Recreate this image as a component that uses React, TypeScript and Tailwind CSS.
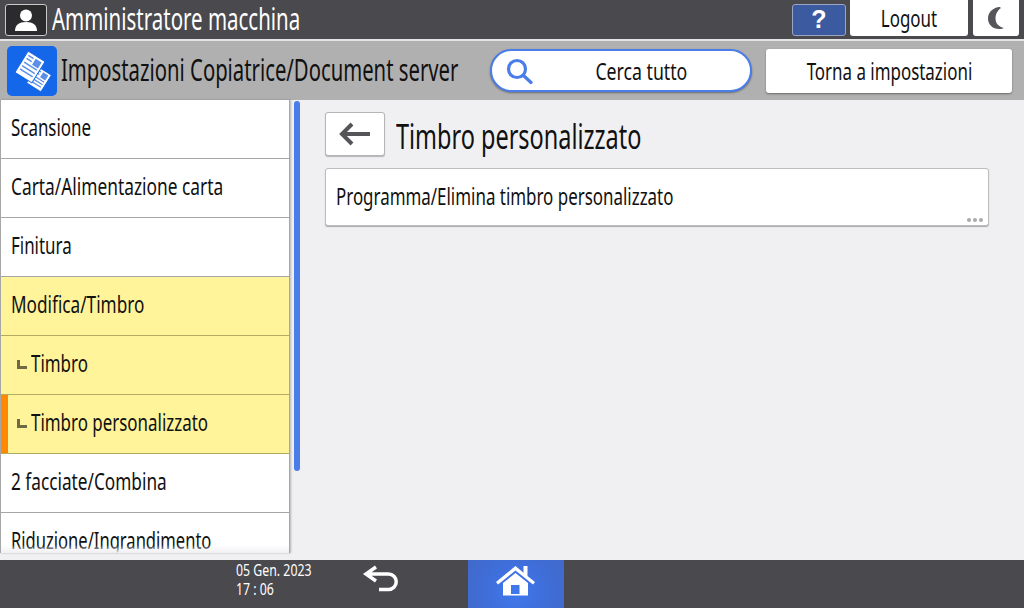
import { ReactNode } from "react";

// Panel text is a squeezed sans, so every label goes through this
function Label({ children, className = "" }: { children: ReactNode; className?: string }) {
  return <span className={`inline-block whitespace-nowrap ${className}`}>{children}</span>;
}

function MenuRow({ label, active, sub, marker, squeeze = "scale-x-[0.705]" }: { label: string; active?: boolean; sub?: boolean; marker?: boolean; squeeze?: string }) {
  return (
    <div className={`relative flex h-[59px] shrink-0 items-center border-b ${active ? "border-[#b3aa62] bg-[#fff49a]" : "border-[#a6a6a6] bg-white"} pb-[4px] pl-[10px]`}>
      {marker && <div className="absolute bottom-0 left-0 top-0 w-[7px] bg-[#ff8a00]" />}
      {sub && <div className="ml-[6px] mr-[4px] mt-[3px] h-[9px] w-[10px] shrink-0 border-b-[3px] border-l-[3px] border-[#6f6a45]" />}
      <Label className={`origin-left ${squeeze} text-[24px] leading-none text-[#111]`}>{label}</Label>
    </div>
  );
}

export default function App() {
  return (
    <div className="flex h-[608px] w-[1024px] flex-col overflow-hidden bg-[#f0eff2] font-['Noto_Sans',sans-serif]">
      {/* top status bar */}
      <div className="flex h-[41px] shrink-0 items-center border-b-2 border-[#e4e4e4] bg-[#4a494e] pl-[5px]">
        <div className="flex h-[32px] w-[42px] shrink-0 items-center justify-center rounded-[3px] border border-[#c9c9c9] bg-[#2b2b2d]">
          <svg viewBox="0 0 28 24" className="h-[24px] w-[28px]" fill="#fff">
            <circle cx="14" cy="7.500" r="6" />
            <path d="M3 23c0-6 4-9 11-9s11 3 11 9z" />
          </svg>
        </div>
        <div className="ml-[5px] min-w-0 flex-1">
          <Label className="origin-left scale-x-[0.682] text-[30px] leading-none text-white">Amministratore macchina</Label>
        </div>
        <div className="flex shrink-0 items-center">
          <div className="flex h-[32px] w-[54px] items-center justify-center rounded-[3px] border border-[#9aa5c4] bg-[#3b5aa0] font-['Liberation_Sans',sans-serif] text-[25px] font-bold text-white">?</div>
          <div className="ml-[4px] flex h-[36px] w-[118px] -translate-y-[2px] items-center justify-center rounded-b-[3px] bg-white">
            <Label className="scale-x-[0.705] text-[24px] leading-none text-[#111]">Logout</Label>
          </div>
          <div className="ml-[5px] mr-[5px] flex h-[36px] w-[46px] -translate-y-[2px] items-center justify-center rounded-b-[3px] bg-white">
            <svg viewBox="0 0 20 24" className="h-[26px] w-[20px]" fill="#55555a">
              <path d="M13 1C6 2 2 7 2 12.500S6 23 13.500 23c2 0 3.500-.5 4.500-1-5-1-8.500-4.500-8.500-9.500S12 4 15 2c-.5-.5-1-1-2-1z" />
            </svg>
          </div>
        </div>
      </div>

      {/* title bar */}
      <div className="flex h-[59px] shrink-0 items-center bg-[#b0b0b0] pl-[7px]">
        <div className="flex h-[50px] w-[50px] shrink-0 items-center justify-center rounded-[5px] bg-[#1467e8]">
          <svg viewBox="0 0 50 50" className="h-[50px] w-[50px]">
            <g transform="rotate(32 32 33)">
              <rect x="23.500" y="23" width="17" height="20" fill="#fff" stroke="#1467e8" strokeWidth="1" />
              <rect x="32" y="25" width="6" height="6" fill="#5b8fe8" />
              <path d="M26 26h4M26 29h4M26 33h12M26 36h12M26 39h12" stroke="#5b8fe8" strokeWidth="1.300" />
            </g>
            <g transform="rotate(32 23 21)">
              <rect x="13" y="8.500" width="20" height="25" fill="#fff" stroke="#1467e8" strokeWidth="1" />
              <rect x="23.500" y="11" width="7" height="7" fill="#5b8fe8" />
              <path d="M15.500 12h6M15.500 15.500h6M15.500 20h15M15.500 24h15M15.500 28h15" stroke="#5b8fe8" strokeWidth="1.500" />
            </g>
          </svg>
        </div>
        <div className="ml-[4px] min-w-0 flex-1">
          <Label className="origin-left scale-x-[0.676] text-[30px] leading-none text-[#111]">Impostazioni Copiatrice/Document server</Label>
        </div>
        <div className="flex shrink-0 items-center">
          <div className="relative flex h-[43px] w-[262px] items-center justify-center rounded-full border-2 border-[#4a7de8] bg-white shadow-[0_1px_2px_rgba(0,0,0,0.4)]">
            <svg viewBox="0 0 28 28" className="absolute left-[13px] top-[6px] h-[28px] w-[28px]" fill="none" stroke="#4a7de8" strokeWidth="3.200" strokeLinecap="round">
              <circle cx="12" cy="12" r="8.500" />
              <path d="M18.500 18.500l7.500 7" />
            </svg>
            <Label className="ml-[40px] scale-x-[0.737] text-[24px] leading-none text-[#111]">Cerca tutto</Label>
          </div>
          <div className="ml-[14px] mr-[12px] flex h-[44px] w-[246px] items-center justify-center rounded-[3px] bg-white shadow-[0_1px_2px_rgba(0,0,0,0.4)]">
            <Label className="scale-x-[0.705] text-[24px] leading-none text-[#111]">Torna a impostazioni</Label>
          </div>
        </div>
      </div>

      {/* body */}
      <div className="flex min-h-0 flex-1">
        <div className="relative flex h-[453px] w-[290px] shrink-0 flex-col overflow-hidden border-x border-x-[#a6a6a6] shadow-[1px_0_2px_rgba(0,0,0,0.25)]">
          <MenuRow label="Scansione" />
          <MenuRow label="Carta/Alimentazione carta" squeeze="scale-x-[0.722]" />
          <MenuRow label="Finitura" />
          <MenuRow label="Modifica/Timbro" squeeze="scale-x-[0.716]" active />
          <MenuRow label="Timbro" active sub />
          <MenuRow label="Timbro personalizzato" active sub marker />
          <MenuRow label="2 facciate/Combina" squeeze="scale-x-[0.718]" />
          <MenuRow label="Riduzione/Ingrandimento" squeeze="scale-x-[0.69]" />
          <div className="absolute bottom-0 left-0 right-0 h-[8px] bg-gradient-to-b from-white/0 to-[#f0eff2]" />
        </div>
        <div className="ml-[4px] mt-[1px] h-[370px] w-[6px] shrink-0 rounded-[3px] bg-[#4a7de8]" />
        <div className="ml-[25px] flex flex-1 flex-col pt-[12px]">
          <div className="flex items-center">
            <div className="flex h-[44px] w-[60px] shrink-0 items-center justify-center rounded-[3px] border border-[#b5b5b5] bg-white shadow-[0_1px_1px_rgba(0,0,0,0.25)]">
              <svg viewBox="0 0 32 24" className="h-[24px] w-[32px]" fill="none" stroke="#555559" strokeWidth="4">
                <path d="M31 12H3M13 2L3 12l10 10" />
              </svg>
            </div>
            <Label className="ml-[11px] mt-[3px] origin-left scale-x-[0.69] text-[34px] leading-none text-[#111]">Timbro personalizzato</Label>
          </div>
          <div className="relative mt-[12px] flex h-[58px] w-[664px] items-center rounded-[3px] border border-[#bdbdbd] bg-white pb-[3px] pl-[10px] shadow-[0_1px_1px_rgba(0,0,0,0.3)]">
            <Label className="origin-left scale-x-[0.705] text-[24px] leading-none text-[#111]">Programma/Elimina timbro personalizzato</Label>
            <div className="absolute bottom-[3px] right-[5px] flex gap-[2px]">
              <div className="h-[4px] w-[4px] rounded-full bg-[#aaa]" />
              <div className="h-[4px] w-[4px] rounded-full bg-[#aaa]" />
              <div className="h-[4px] w-[4px] rounded-full bg-[#aaa]" />
            </div>
          </div>
        </div>
      </div>

      {/* bottom bar */}
      <div className="flex h-[48px] shrink-0 items-stretch bg-[#4a494e]">
        <div className="ml-[236px] flex w-[120px] flex-col text-[17px] leading-[19px] text-white">
          <Label className="origin-left scale-x-[0.725]">05 Gen. 2023</Label>
          <Label className="origin-left scale-x-[0.725]">17 : 06</Label>
        </div>
        <div className="ml-[4px] w-[40px] pt-[2px]">
          <svg viewBox="360 562 40 32" className="h-[32px] w-[40px]" fill="none" stroke="#fff" strokeWidth="3.500">
            <path d="M376 567l-10 7 10 7M366 574h22.500a7 7 0 0 1 0 15.500H379" />
          </svg>
        </div>
        <div className="ml-[68px] flex w-[96px] items-start justify-center bg-[radial-gradient(circle_at_50%_65%,#3f78ee_0%,#3f6fdc_45%,#4169c8_100%)] pt-[4px]">
          <svg viewBox="497 564 40 32" className="h-[32px] w-[40px]" fill="#fff">
            <path d="M516.500 566L497 582l2 2.500 17.500-14 17.500 14 2-2.500-7.500-6v-10h-4v6.700z" />
            <path fillRule="evenodd" d="M504 583l12.500-10 12.500 10v12.500h-25zM512 585v9h8.500v-9z" />
          </svg>
        </div>
      </div>
    </div>
  );
}
